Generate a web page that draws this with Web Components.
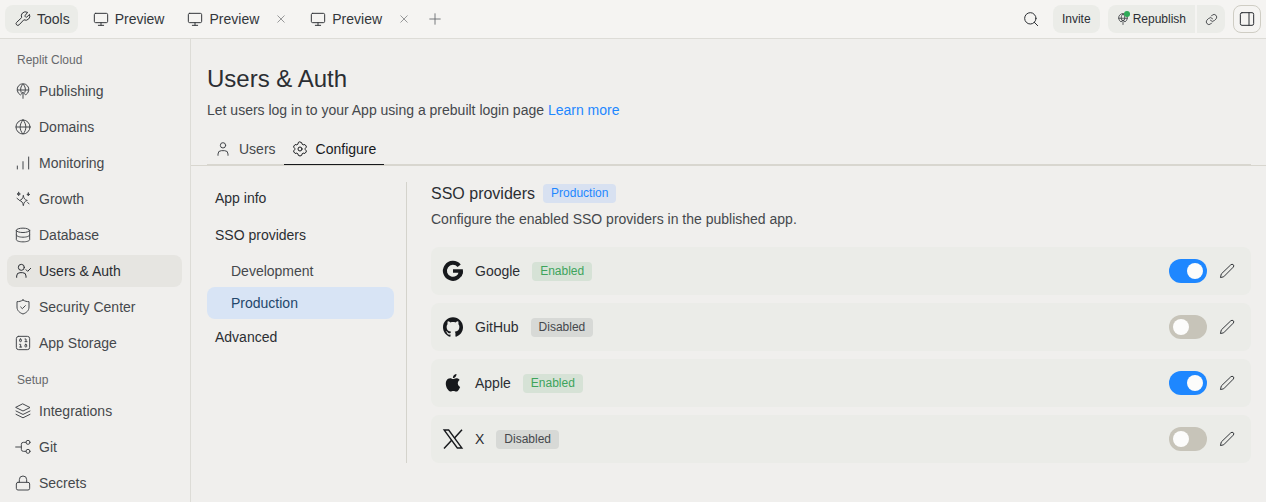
<!DOCTYPE html>
<html lang="en">
<head>
<meta charset="utf-8">
<title>Users &amp; Auth</title>
<style>
  html, body { margin: 0; min-height: 100%; background: #f0efed; }
  body {
    font: 14px/20px "Liberation Sans", Arial, sans-serif;
    color: #45484c;
    --line: #dddcd7;
    --soft: #ebece8;
    --ink: #2b2e33;
    --blue: #1e87ff;
  }
</style>
</head>
<body>
<auth-app></auth-app>

<script>
const ICONS = {
  wrench: '<path d="M15.200 6.600a1.200 1.200 0 0 0 0 1.700l.8.8a1.200 1.200 0 0 0 1.700 0l4-4a6.200 6.200 0 0 1-8.400 8.100l-7.200 7.600a2.600 2.600 0 0 1-3.700-3.700l7.600-7.200a6.200 6.200 0 0 1 8.400-8.100z"/>',
  monitor: '<rect x="2" y="3.500" width="20" height="14" rx="2"/><path d="M12 17.500v4M8 21.500h8"/>',
  close: '<path d="M5.500 5.500l13 13M18.500 5.500l-13 13"/>',
  plus: '<path d="M12 3v18M3 12h18"/>',
  search: '<circle cx="11" cy="11" r="8.500"/><path d="M17 17l5 5"/>',
  link: '<path d="M10 13.500a5 5 0 0 0 7.400.4l3.200-3.200a5 5 0 0 0-7-7l-1.800 1.800"/><path d="M14 10.500a5 5 0 0 0-7.400-.4l-3.200 3.200a5 5 0 0 0 7 7l1.800-1.800"/>',
  panel: '<rect x="2" y="2.500" width="20" height="19" rx="2.500"/><path d="M15 2.500v19"/>',
  publish: '<path d="M7.500 17.500A8.800 8.800 0 1 1 16.500 17.500M3.500 10.500h17M9.200 14c-1.600-4.300-.9-9 2.800-12.300 3.700 3.300 4.400 8 2.800 12.300M12 23v-9M8.500 17.500l3.500-3.500 3.500 3.500"/>',
  globe: '<circle cx="12" cy="12" r="10.500"/><path d="M1.500 12h21M12 1.500c-5.700 6-5.700 15 0 21 5.700-6 5.700-15 0-21z"/>',
  bars: '<path d="M3.500 21v-4.500M12 21V10M20.500 21V3"/>',
  growth: '<path d="M12.500 7c.9 4.800 2.300 6.200 6 7.200-3.700 1-5.100 2.500-6 7.800-.9-5.300-2.300-6.800-6-7.800 3.700-1 5.100-2.400 6-7.200z"/><path fill="currentColor" d="M5.500 2c.4 1.700.8 2.100 2.500 2.500-1.700.4-2.100.8-2.500 2.500-.4-1.700-.8-2.100-2.500-2.500 1.700-.4 2.100-.8 2.500-2.500zM20 3c.3 1.500.7 1.900 2.200 2.200-1.500.3-1.900.7-2.200 2.200-.3-1.500-.7-1.900-2.200-2.200 1.500-.3 1.900-.7 2.200-2.200z"/><path d="M3 11l2.500 2M19 17.500l2 1.500"/>',
  database: '<ellipse cx="12" cy="5" rx="10" ry="3.300"/><path d="M2 5v14c0 1.800 4.500 3.300 10 3.300s10-1.500 10-3.300V5M2 12c0 1.800 4.500 3.300 10 3.300s10-1.500 10-3.300"/>',
  usercheck: '<circle cx="9.500" cy="6.500" r="4.500"/><path d="M2.500 21.500v-2a5 5 0 0 1 5-5h4a5 5 0 0 1 5 5v2M16.500 10l2.500 2.500 4.500-4.500"/>',
  user: '<circle cx="12" cy="6.500" r="4"/><path d="M4.500 21.500v-2a5 5 0 0 1 5-5h5a5 5 0 0 1 5 5v2"/>',
  shield: '<path d="M12 1.500c3 2 6 2.500 9 2.500v8c0 5.500-4 8.700-9 10.500-5-1.800-9-5-9-10.500V4c3 0 6-.5 9-2.500z"/><path d="M8.500 12l2.500 2.500 4.500-4.500"/>',
  storage: '<rect x="2" y="2" width="20" height="20" rx="3.500"/><path d="M15 6h1.500v4M7 14h1.500v4M15 10h3M7 18h3"/><rect x="7" y="6" width="2.500" height="4" rx="1"/><rect x="15" y="14" width="2.500" height="4" rx="1"/>',
  layers: '<path d="M12 1.500l10.500 5.300L12 12 1.500 6.800zM1.500 12L12 17.200 22.500 12M1.500 17L12 22.200 22.500 17"/>',
  git: '<circle cx="19.500" cy="5" r="3"/><circle cx="19.500" cy="18.500" r="3"/><path d="M1 12h8.500M16.500 5h-4a3 3 0 0 0-3 3v7.500a3 3 0 0 0 3 3h4"/>',
  lock: '<rect x="2" y="11" width="20" height="11.500" rx="2.500"/><path d="M6.500 11V7a5.500 5.500 0 0 1 11 0v4"/>',
  gear: '<circle cx="12" cy="12" r="3"/><path d="M12 1.500l2.500 1 .8 2.400 1.500.9 2.500-.5 2 2.300.2 1.600-1.700 2v1.600l1.700 2-.2 1.600-2 2.300-2.500-.5-1.500.9-.8 2.400-2.500 1-2.500-1-.8-2.400-1.500-.9-2.500.5-2-2.300-.2-1.600 1.700-2v-1.600l-1.700-2 .2-1.600 2-2.300 2.500.5 1.500-.9.800-2.400z"/>',
  pencil: '<path d="M17.800 2.600a2.500 2.500 0 0 1 3.600 3.600L7 20.700l-4.800 1.100L3.300 17z"/>',
  google: '<path fill="none" stroke-width="4.800" stroke-linecap="butt" d="M19.400 5.800A9.600 9.600 0 1 0 21.500 12"/><path stroke="none" fill="currentColor" d="M12 9.900h11.800c.5 3.300-.2 6.500-2 9l-3.700-2.800c.4-.6.700-1.200.9-1.900h-7z"/>',
  github: '<path stroke="none" fill="currentColor" d="M12 .297c-6.630 0-12 5.373-12 12 0 5.303 3.438 9.800 8.205 11.385.6.113.82-.258.82-.577 0-.285-.01-1.040-.015-2.040-3.338.724-4.042-1.610-4.042-1.610C4.422 18.070 3.633 17.700 3.633 17.700c-1.087-.744.084-.729.084-.729 1.205.084 1.838 1.236 1.838 1.236 1.070 1.835 2.809 1.305 3.495.998.108-.776.417-1.305.760-1.605-2.665-.3-5.466-1.332-5.466-5.930 0-1.310.465-2.380 1.235-3.220-.135-.303-.540-1.523.105-3.176 0 0 1.005-.322 3.300 1.230.960-.267 1.980-.399 3-.405 1.020.006 2.040.138 3 .405 2.280-1.552 3.285-1.230 3.285-1.230.645 1.653.240 2.873.120 3.176.765.840 1.230 1.910 1.230 3.220 0 4.610-2.805 5.625-5.475 5.920.420.360.810 1.096.810 2.220 0 1.606-.015 2.896-.015 3.286 0 .315.210.690.825.570C20.565 22.092 24 17.592 24 12.297c0-6.627-5.373-12-12-12"/>',
  apple: '<g transform="translate(1.400 1.200) scale(.88)"><path stroke="none" fill="currentColor" d="M12.152 6.896c-.948 0-2.415-1.078-3.960-1.040-2.040.027-3.910 1.183-4.961 3.014-2.117 3.675-.546 9.103 1.519 12.090 1.013 1.454 2.208 3.090 3.792 3.039 1.520-.065 2.090-.987 3.935-.987 1.831 0 2.350.987 3.960.948 1.637-.026 2.676-1.480 3.676-2.948 1.156-1.688 1.636-3.325 1.662-3.415-.039-.013-3.182-1.221-3.220-4.857-.026-3.040 2.480-4.494 2.597-4.559-1.429-2.090-3.623-2.324-4.390-2.376-2-.156-3.675 1.090-4.610 1.090zM15.530 3.830c.843-1.012 1.400-2.427 1.245-3.830-1.207.052-2.662.805-3.532 1.818-.780.896-1.454 2.338-1.273 3.714 1.338.104 2.715-.688 3.559-1.701"/></g>',
  x: '<path stroke-width="1.600" stroke-linejoin="miter" d="M1.300 1.200h5.500l15.900 21.600h-5.500z"/><path stroke-width="1.800" stroke-linecap="butt" d="M22.800.8l-9 9.900M10.400 13.600L1.200 23.400"/>'
};

class UiIcon extends HTMLElement {
  constructor() { super(); this.attachShadow({ mode: "open" }); }
  connectedCallback() {
    this.shadowRoot.innerHTML = `
      <style>
        :host { display: block; flex: none; width: var(--icon-size, 16px); height: var(--icon-size, 16px); }
        svg { display: block; width: 100%; height: 100%; overflow: visible; }
      </style>
      <svg viewBox="0 0 24 24" fill="none" stroke="currentColor" stroke-width="1.5"
           stroke-linecap="round" stroke-linejoin="round" aria-hidden="true">${ICONS[this.getAttribute("name")]}</svg>`;
  }
}
customElements.define("ui-icon", UiIcon);

class TopTab extends HTMLElement {
  constructor() { super(); this.attachShadow({ mode: "open" }); }
  connectedCallback() {
    const close = this.hasAttribute("closable")
      ? '<button class="close" aria-label="Close tab"><ui-icon name="close"></ui-icon></button>' : "";
    this.shadowRoot.innerHTML = `
      <style>
        :host { display: flex; align-items: center; height: 28px; border-radius: 8px; color: #33363a; }
        :host([active]) { background: var(--soft); }
        button { font: inherit; color: inherit; background: none; border: 0; padding: 0; display: flex; align-items: center; cursor: pointer; }
        .tab { gap: 6px; height: 28px; padding: 0 8px 0 10px; }
        .close { --icon-size: 12px; width: 16px; height: 16px; justify-content: center; margin: 0 6px; color: #77797b; }
      </style>
      <button class="tab"><ui-icon name="${this.getAttribute("icon")}"></ui-icon><slot></slot></button>${close}`;
  }
}
customElements.define("top-tab", TopTab);

class TopBar extends HTMLElement {
  constructor() {
    super();
    this.attachShadow({ mode: "open" }).innerHTML = `
      <style>
        :host { display: block; background: #f5f4f2; border-bottom: 1px solid var(--line); }
        header { display: flex; align-items: center; justify-content: space-between; height: 38px; padding: 0 5px; }
        nav, .actions { display: flex; align-items: center; }
        nav { gap: 5px; }
        .actions { gap: 8px; }
        button { font: inherit; font-size: 12px; color: var(--ink); border: 0; height: 28px; background: var(--soft);
                 display: flex; align-items: center; justify-content: center; gap: 4px; cursor: pointer; box-sizing: border-box; }
        .plain { background: none; width: 28px; padding: 0; }
        .add { --icon-size: 14px; width: 24px; color: #66686b; }
        .search { --icon-size: 16px; }
        .invite { border-radius: 8px; padding: 0 9px; }
        .split { display: flex; gap: 2px; }
        .republish { border-radius: 8px 0 0 8px; padding: 0 9px; }
        .link { border-radius: 0 8px 8px 0; width: 28px; padding: 0; --icon-size: 13px; }
        .status { position: relative; --icon-size: 12px; }
        .status::after { content: ""; position: absolute; top: -2px; right: -1px; width: 6px; height: 6px; border-radius: 50%; background: #2faa57; }
        .panel { background: none; border: 1px solid #cfcdc4; border-radius: 8px; width: 28px; padding: 0; --icon-size: 16px; }
      </style>
      <header>
        <nav aria-label="Open tabs">
          <top-tab icon="wrench" active>Tools</top-tab>
          <top-tab icon="monitor">Preview</top-tab>
          <top-tab icon="monitor" closable>Preview</top-tab>
          <top-tab icon="monitor" closable>Preview</top-tab>
          <button class="plain add" aria-label="New tab"><ui-icon name="plus"></ui-icon></button>
        </nav>
        <div class="actions">
          <button class="plain search" aria-label="Search"><ui-icon name="search"></ui-icon></button>
          <button class="invite">Invite</button>
          <div class="split">
            <button class="republish"><span class="status"><ui-icon name="publish"></ui-icon></span>Republish</button>
            <button class="link" aria-label="Copy link"><ui-icon name="link"></ui-icon></button>
          </div>
          <button class="panel" aria-label="Toggle side panel"><ui-icon name="panel"></ui-icon></button>
        </div>
      </header>`;
  }
}
customElements.define("top-bar", TopBar);

class SideItem extends HTMLElement {
  constructor() { super(); this.attachShadow({ mode: "open" }); }
  connectedCallback() {
    this.shadowRoot.innerHTML = `
      <style>
        :host { display: block; }
        a { display: flex; align-items: center; gap: 8px; height: 32px; padding: 0 8px; border-radius: 8px; color: #45484c; text-decoration: none; }
        :host([active]) a { background: #e6e5e1; color: var(--ink); }
      </style>
      <a href="#"><ui-icon name="${this.getAttribute("icon")}"></ui-icon><slot></slot></a>`;
  }
}
customElements.define("side-item", SideItem);

class SideBar extends HTMLElement {
  constructor() {
    super();
    this.attachShadow({ mode: "open" }).innerHTML = `
      <style>
        :host { display: block; border-right: 1px solid var(--line); box-sizing: border-box; }
        nav { display: flex; flex-direction: column; gap: 4px; padding: 4px 8px 0 7px; }
        h2 { margin: 0; font-size: 12px; font-weight: 400; line-height: 20px; height: 20px; padding: 7px 0 1px 10px; color: #66686b; }
      </style>
      <nav aria-label="Tools">
        <h2>Replit Cloud</h2>
        <side-item icon="publish">Publishing</side-item>
        <side-item icon="globe">Domains</side-item>
        <side-item icon="bars">Monitoring</side-item>
        <side-item icon="growth">Growth</side-item>
        <side-item icon="database">Database</side-item>
        <side-item icon="usercheck" active>Users &amp; Auth</side-item>
        <side-item icon="shield">Security Center</side-item>
        <side-item icon="storage">App Storage</side-item>
        <h2>Setup</h2>
        <side-item icon="layers">Integrations</side-item>
        <side-item icon="git">Git</side-item>
        <side-item icon="lock">Secrets</side-item>
      </nav>`;
  }
}
customElements.define("side-bar", SideBar);

class PageHead extends HTMLElement {
  constructor() {
    super();
    this.attachShadow({ mode: "open" }).innerHTML = `
      <style>
        :host { display: block; border-bottom: 1px solid #d8d6cf; padding: 24px 15px 0 16px; }
        h1 { margin: 0; font-size: 24px; line-height: 32px; font-weight: 400; color: var(--ink); }
        p { margin: 5px 0 0; }
        a { color: var(--blue); text-decoration: none; }
        .tabs { display: flex; margin-top: 13px; border-bottom: 1px solid #d8d6cf; }
        .tabs button { font: inherit; color: inherit; background: none; border: 0; height: 32px; padding: 0 8px; margin-bottom: -1px;
                       border-bottom: 1px solid transparent; display: flex; align-items: center; gap: 8px; cursor: pointer; box-sizing: border-box; }
        .tabs button[aria-selected="true"] { color: #17191c; border-bottom-color: #17191c; }
      </style>
      <h1>Users &amp; Auth</h1>
      <p>Let users log in to your App using a prebuilt login page <a href="#">Learn more</a></p>
      <div class="tabs" role="tablist">
        <button role="tab" aria-selected="false"><ui-icon name="user"></ui-icon>Users</button>
        <button role="tab" aria-selected="true"><ui-icon name="gear"></ui-icon>Configure</button>
      </div>`;
  }
}
customElements.define("page-head", PageHead);

class ConfigNav extends HTMLElement {
  constructor() {
    super();
    this.attachShadow({ mode: "open" }).innerHTML = `
      <style>
        :host { display: block; border-right: 1px solid #d4d3cc; padding-right: 12px; }
        ul { list-style: none; margin: 0; padding: 0; }
        .sub { padding: 4px 0 2px; }
        .group { margin-top: 5px; }
        a { display: block; line-height: 32px; padding: 0 8px; border-radius: 8px; color: var(--ink); text-decoration: none; }
        .sub a { padding-left: 24px; color: #45484c; }
        .sub a[aria-current] { background: #d8e4f5; color: #24476b; }
      </style>
      <nav aria-label="Configuration">
        <ul>
          <li><a href="#">App info</a></li>
          <li class="group"><a href="#">SSO providers</a>
            <ul class="sub">
              <li><a href="#">Development</a></li>
              <li><a href="#" aria-current="page">Production</a></li>
            </ul>
          </li>
          <li><a href="#">Advanced</a></li>
        </ul>
      </nav>`;
  }
}
customElements.define("config-nav", ConfigNav);

class StatusBadge extends HTMLElement {
  constructor() {
    super();
    this.attachShadow({ mode: "open" }).innerHTML = `
      <style>
        :host { display: block; flex: none; font-size: 12px; line-height: 19px; padding: 0 8px; border-radius: 4px; background: #d7d9d6; color: #45484c; }
        :host([tone="green"]) { background: #d6e2d6; color: #3da45c; }
        :host([tone="blue"]) { background: #d8e1f1; color: var(--blue); }
      </style>
      <slot></slot>`;
  }
}
customElements.define("status-badge", StatusBadge);

class ProviderRow extends HTMLElement {
  constructor() { super(); this.attachShadow({ mode: "open" }); }
  connectedCallback() {
    const name = this.getAttribute("name");
    const on = this.hasAttribute("enabled");
    this.shadowRoot.innerHTML = `
      <style>
        :host { display: flex; align-items: center; gap: 12px; height: 48px; padding: 0 12px; border-radius: 8px; background: var(--soft); }
        .logo { --icon-size: 20px; color: #17191c; }
        label { color: var(--ink); font-weight: 400; }
        .controls { display: flex; align-items: center; gap: 8px; margin-left: auto; }
        input { appearance: none; margin: 0; width: 38px; height: 24px; border-radius: 12px; background: #c7c4b9; padding: 4px; box-sizing: border-box; display: flex; cursor: pointer; }
        input::before { content: ""; width: 16px; height: 16px; border-radius: 50%; background: #fcfcfb; }
        input:checked { background: var(--blue); justify-content: flex-end; }
        button { border: 0; background: none; padding: 0; width: 24px; height: 24px; display: flex; align-items: center; justify-content: center; color: #33363a; cursor: pointer; }
      </style>
      <ui-icon class="logo" name="${name.toLowerCase()}"></ui-icon>
      <label for="switch">${name}</label>
      <status-badge ${on ? 'tone="green"' : ""}>${on ? "Enabled" : "Disabled"}</status-badge>
      <div class="controls">
        <input type="checkbox" role="switch" id="switch" ${on ? "checked" : ""}>
        <button aria-label="Edit ${name}"><ui-icon name="pencil"></ui-icon></button>
      </div>`;
  }
}
customElements.define("provider-row", ProviderRow);

class ProviderPanel extends HTMLElement {
  constructor() {
    super();
    this.attachShadow({ mode: "open" }).innerHTML = `
      <style>
        :host { display: block; min-width: 0; }
        .title { display: flex; align-items: center; gap: 8px; height: 23px; }
        h2 { margin: 0; font-size: 16px; line-height: 22px; font-weight: 400; color: var(--ink); }
        p { margin: 4px 0 18px; }
        .rows { display: flex; flex-direction: column; gap: 8px; }
      </style>
      <div class="title"><h2>SSO providers</h2><status-badge tone="blue">Production</status-badge></div>
      <p>Configure the enabled SSO providers in the published app.</p>
      <div class="rows">
        <provider-row name="Google" enabled></provider-row>
        <provider-row name="GitHub"></provider-row>
        <provider-row name="Apple" enabled></provider-row>
        <provider-row name="X"></provider-row>
      </div>`;
  }
}
customElements.define("provider-panel", ProviderPanel);

class AuthApp extends HTMLElement {
  constructor() {
    super();
    this.attachShadow({ mode: "open" }).innerHTML = `
      <style>
        :host { display: flex; flex-direction: column; min-height: 100vh; }
        .body { display: grid; grid-template-columns: 191px minmax(0, 1fr); flex: 1; }
        .content { display: grid; grid-template-columns: 200px minmax(0, 1fr); gap: 24px; padding: 16px 15px 39px 16px; }
      </style>
      <top-bar></top-bar>
      <div class="body">
        <side-bar></side-bar>
        <main>
          <page-head></page-head>
          <div class="content">
            <config-nav></config-nav>
            <provider-panel></provider-panel>
          </div>
        </main>
      </div>`;
  }
}
customElements.define("auth-app", AuthApp);
</script>
</body>
</html>
